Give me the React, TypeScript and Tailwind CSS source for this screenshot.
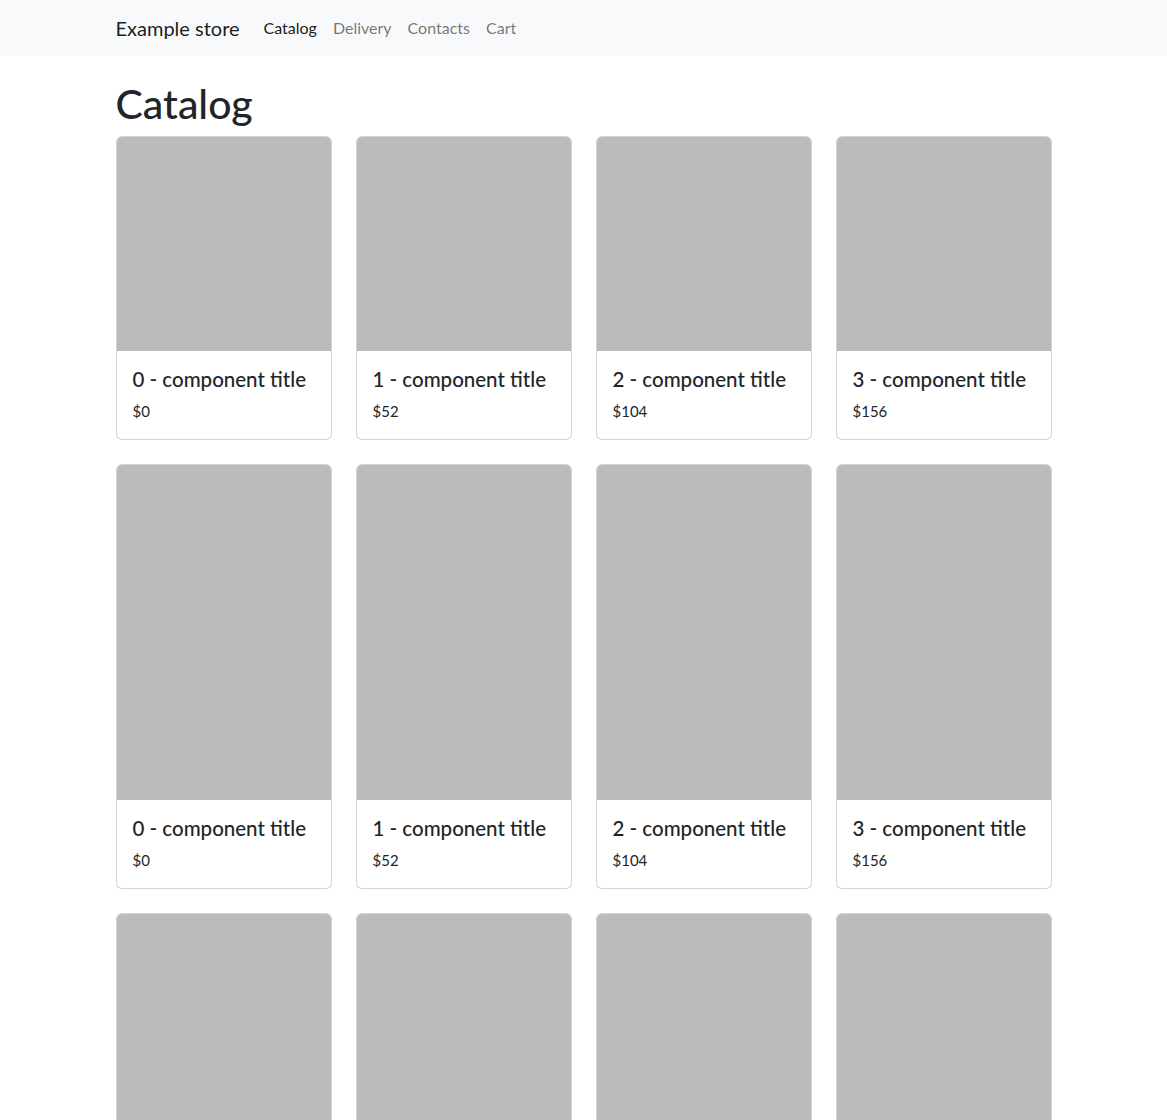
const items = [0, 1, 2, 3];

function Card({ n, imgH }: { n: number; imgH: string }) {
  return (
    <div className="flex flex-col border border-black/[0.175] rounded-md overflow-hidden bg-white">
      <div className={`${imgH} bg-[#bbbbbb]`} />
      <div className="p-4">
        <h5 className="text-[20.5px] leading-6 font-medium mb-2">{n} - component title</h5>
        <p className="text-[15px] leading-6">${n * 52}</p>
      </div>
    </div>
  );
}

export default function App() {
  return (
    <div className="min-h-screen bg-white text-[#212529]" style={{ fontFamily: 'Lato, "Noto Sans", sans-serif' }}>
      <nav className="h-14 bg-[#f8f9fa]">
        <div className="w-[960px] mx-auto px-3 h-full flex items-center">
          <a className="text-[20px] text-black/90 mr-4 py-[5px]">Example store</a>
          <ul className="flex">
            <li className="px-2 py-2 text-black/90">Catalog</li>
            <li className="px-2 py-2 text-black/55">Delivery</li>
            <li className="px-2 py-2 text-black/55">Contacts</li>
            <li className="px-2 py-2 text-black/55">Cart</li>
          </ul>
        </div>
      </nav>
      <main className="w-[960px] mx-auto px-3 pt-6">
        <h1 className="text-[41px] leading-[48px] font-medium mb-2 pt-[2px] -mt-[2px]">Catalog</h1>
        <div className="flex flex-col gap-6">
          <div className="grid grid-cols-4 gap-6">
            {items.map(n => <Card key={n} n={n} imgH="h-[214px]" />)}
          </div>
          <div className="grid grid-cols-4 gap-6">
            {items.map(n => <Card key={n} n={n} imgH="h-[335px]" />)}
          </div>
          <div className="grid grid-cols-4 gap-6">
            {items.map(n => <Card key={n} n={n} imgH="h-[335px]" />)}
          </div>
        </div>
      </main>
    </div>
  );
}
